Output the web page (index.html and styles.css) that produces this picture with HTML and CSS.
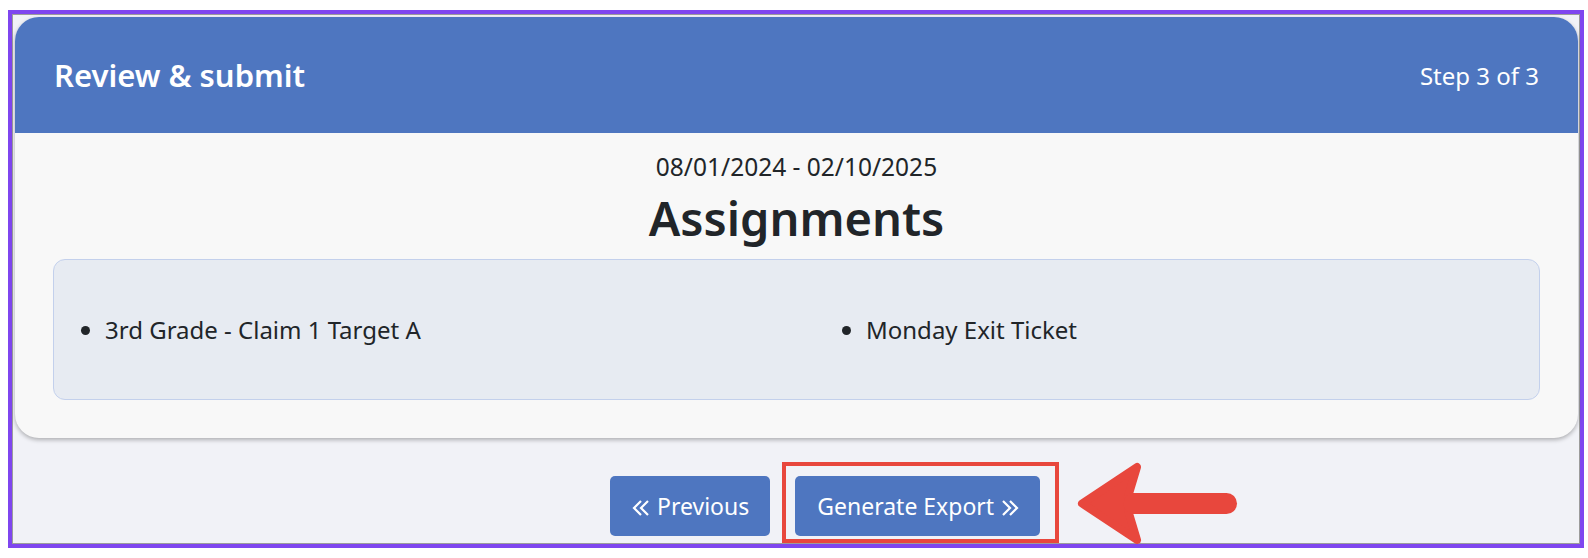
FILE: index.html
```html
<!DOCTYPE html>
<html>
<head>
  <title>Review &amp; submit</title>
  <link rel="stylesheet" href="styles.css">
</head>
<body>
  <div class="frame">
    <div class="screen">
      <div class="card">
        <div class="card-header">
          <h5 class="card-title">Review &amp; submit</h5>
          <span class="step">Step 3 of 3</span>
        </div>
        <div class="card-body">
          <div class="date-range">08/01/2024 - 02/10/2025</div>
          <h2 class="section-title">Assignments</h2>
          <div class="summary">
            <ul class="summary-list">
              <li>3rd Grade - Claim 1 Target A</li>
              <li>Monday Exit Ticket</li>
            </ul>
          </div>
        </div>
      </div>

      <div class="actions">
        <button type="button" class="btn">
          <svg class="chev" width="18" height="16" viewBox="0 0 18 16">
            <polyline points="9,1 2,8 9,15" />
            <polyline points="16,1 9,8 16,15" />
          </svg>
          Previous
        </button>
        <button type="button" class="btn">
          Generate Export
          <svg class="chev" width="18" height="16" viewBox="0 0 18 16">
            <polyline points="2,1 9,8 2,15" />
            <polyline points="9,1 16,8 9,15" />
          </svg>
        </button>
      </div>

      <!-- annotation -->
      <div class="annot-box"></div>
      <svg class="annot-arrow" width="172" height="92" viewBox="0 0 172 92">
        <polygon points="12,48.5 67,12 58,42 66,42 66,55 58,55 67,85"
                 fill="#e8473d" stroke="#e8473d" stroke-width="8" stroke-linejoin="round"/>
        <line x1="64" y1="48.5" x2="156.5" y2="48.5"
              stroke="#e8473d" stroke-width="21" stroke-linecap="round"/>
      </svg>
    </div>
  </div>
</body>
</html>
```

FILE: styles.css
```css
body {
  margin: 0;
  background: #ffffff;
  font-family: "Noto Sans", "Open Sans", sans-serif;
  color: #212529;
}
.frame {
  margin: 10px 0 0 8px;
  width: 1576px;
  height: 538px;
  border: 4px solid #7f46ef;
  box-sizing: border-box;
}
.screen {
  position: relative;
  height: 100%;
  box-sizing: border-box;
  border: 1px solid #9c9c9c;
  background: #f1f2f7;
  padding: 2px 1px 0 2px;
}
.card {
  background: #f8f8f8;
  border-radius: 24px;
  overflow: hidden;
  box-shadow: 0 2px 4px rgba(0, 0, 0, 0.28);
}
.card-header {
  height: 116px;
  background: #4e76c0;
  color: #fff;
  display: flex;
  align-items: center;
  justify-content: space-between;
  padding: 0 39px;
}
.card-title {
  margin: 0;
  font-size: 31px;
  font-weight: 600;
}
.step {
  font-size: 24px;
}
.card-body {
  padding: 20px 38px 38px;
  text-align: center;
}
.date-range {
  font-size: 24.5px;
  line-height: 28px;
}
.section-title {
  margin: 9px 0 13px;
  font-size: 47px;
  font-weight: 600;
  line-height: 56px;
}
.summary {
  height: 139px;
  border: 1px solid #c3d0ec;
  border-radius: 12px;
  background: #e7ebf2;
  display: flex;
  align-items: center;
  text-align: left;
}
.summary-list {
  margin: 0;
  padding: 0 0 0 51px;
  display: grid;
  grid-template-columns: 761px 1fr;
  width: 100%;
  font-size: 24px;
}
.actions {
  display: flex;
  gap: 25px;
  padding: 38px 0 0 595px;
}
.btn {
  display: flex;
  align-items: center;
  gap: 7px;
  height: 60px;
  padding: 0 21px 0 22px;
  border: none;
  border-radius: 5px;
  background: #4e76c0;
  color: #fff;
  font-family: inherit;
  font-size: 23px;
}
.chev {
  fill: none;
  stroke: #fff;
  stroke-width: 2.2;
  margin-top: 3px;
}
.annot-box {
  position: absolute;
  left: 769px;
  top: 447px;
  width: 277px;
  height: 81px;
  border: 4px solid #e8473d;
  box-sizing: border-box;
}
.annot-arrow {
  position: absolute;
  left: 1057px;
  top: 440px;
}
```
